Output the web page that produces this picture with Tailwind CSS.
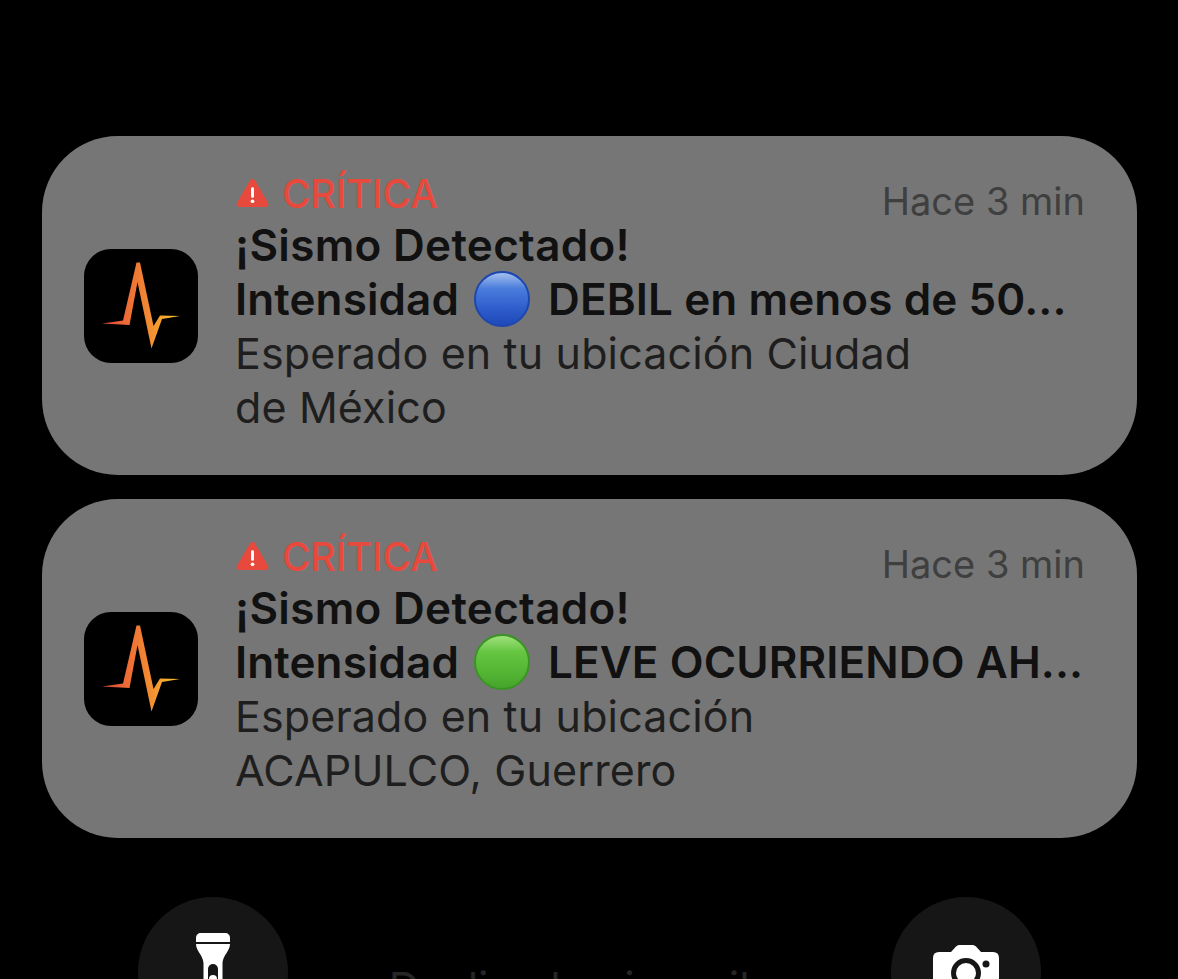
<!DOCTYPE html>
<html lang="es">
<head>
    <meta charset="UTF-8">
    <meta name="viewport" content="width=device-width, initial-scale=1.0">
    <title>Notificaciones</title>
    <script src="https://cdn.jsdelivr.net/npm/@tailwindcss/browser@4"></script>
</head>
<body class="bg-black">
    <div class="w-[1178px] h-[979px] overflow-hidden font-['Inter',sans-serif] pt-[136px] pl-[42px] pr-[41px]">
        <!-- Icon defs -->
        <svg class="w-0 h-0 absolute">
            <defs>
                <linearGradient id="pulse" x1="0" y1="0" x2="1" y2="0">
                    <stop offset="0" stop-color="#d9413a"></stop>
                    <stop offset="0.3" stop-color="#ee6a36"></stop>
                    <stop offset="0.6" stop-color="#f28a33"></stop>
                    <stop offset="1" stop-color="#f8c92c"></stop>
                </linearGradient>
            </defs>
        </svg>

        <!-- Notification 1 -->
        <div class="flex items-center h-[339px] bg-[#767676] rounded-[76px] pl-[42px] pr-[52px]">
            <div class="w-[114px] h-[114px] shrink-0 bg-black rounded-[27px] flex items-center justify-center">
                <svg class="w-[114px] h-[114px]" viewBox="0 0 114 114">
                    <path d="M18 74.5 L39 71.5 L52.5 13.5 L56 13.5 L69.5 77 L76 66.5 L96 67 L78 70 L67.5 99.5 L53.5 33 L45.5 76 Z" fill="url(#pulse)"></path>
                </svg>
            </div>
            <div class="flex-1 ml-[37px] pb-[11px]">
                <div class="flex justify-between items-start h-[51px]">
                    <div class="flex items-center text-[#e8493d] text-[39px] leading-[54px] font-medium">
                        <svg class="w-[33px] h-[29px] mr-[13px] ml-[1px] -mt-[2px]" viewBox="0 0 32 28">
                            <path d="M16 1 C17 1 18 1.6 18.6 2.6 L31 24 C32 26 31 28 28.6 28 L3.4 28 C1 28 0 26 1 24 L13.4 2.6 C14 1.6 15 1 16 1 Z" fill="#e8493d"></path>
                            <rect x="14.6" y="9" width="2.8" height="10" rx="1.2" fill="#fff"></rect>
                            <circle cx="16" cy="22.5" r="1.8" fill="#fff"></circle>
                        </svg>
                        <span>CRÍTICA</span>
                    </div>
                    <span class="text-[#3f3f3f] text-[38px] leading-[54px] mt-[7px]">Hace 3 min</span>
                </div>
                <p class="text-[#111111] text-[44px] leading-[54px] tracking-[0.3px] font-semibold whitespace-nowrap">¡Sismo Detectado!</p>
                <p class="text-[#111111] text-[44px] leading-[54px] h-[54px] tracking-[0.1px] font-semibold whitespace-nowrap flex items-center">Intensidad<span class="w-[56px] h-[56px] shrink-0 rounded-full ml-[15px] mr-[18px] border-2 border-[#1d46ae] bg-[linear-gradient(180deg,#a3bfee_0%,#4a7cdc_30%,#2d5ccb_70%,#1f49b8_100%)]"></span>DEBIL en menos de 50...</p>
                <p class="text-[#1e1e1e] text-[43px] leading-[54px] tracking-[0.13px] whitespace-nowrap">Esperado en tu ubicación Ciudad<br>de México</p>
            </div>
        </div>

        <!-- Notification 2 -->
        <div class="flex items-center h-[339px] mt-[24px] bg-[#767676] rounded-[76px] pl-[42px] pr-[52px]">
            <div class="w-[114px] h-[114px] shrink-0 bg-black rounded-[27px] flex items-center justify-center">
                <svg class="w-[114px] h-[114px]" viewBox="0 0 114 114">
                    <path d="M18 74.5 L39 71.5 L52.5 13.5 L56 13.5 L69.5 77 L76 66.5 L96 67 L78 70 L67.5 99.5 L53.5 33 L45.5 76 Z" fill="url(#pulse)"></path>
                </svg>
            </div>
            <div class="flex-1 ml-[37px] pb-[11px]">
                <div class="flex justify-between items-start h-[51px]">
                    <div class="flex items-center text-[#e8493d] text-[39px] leading-[54px] font-medium">
                        <svg class="w-[33px] h-[29px] mr-[13px] ml-[1px] -mt-[2px]" viewBox="0 0 32 28">
                            <path d="M16 1 C17 1 18 1.6 18.6 2.6 L31 24 C32 26 31 28 28.6 28 L3.4 28 C1 28 0 26 1 24 L13.4 2.6 C14 1.6 15 1 16 1 Z" fill="#e8493d"></path>
                            <rect x="14.6" y="9" width="2.8" height="10" rx="1.2" fill="#fff"></rect>
                            <circle cx="16" cy="22.5" r="1.8" fill="#fff"></circle>
                        </svg>
                        <span>CRÍTICA</span>
                    </div>
                    <span class="text-[#3f3f3f] text-[38px] leading-[54px] mt-[7px]">Hace 3 min</span>
                </div>
                <p class="text-[#111111] text-[44px] leading-[54px] tracking-[0.3px] font-semibold whitespace-nowrap">¡Sismo Detectado!</p>
                <p class="text-[#111111] text-[44px] leading-[54px] h-[54px] tracking-[0.1px] font-semibold whitespace-nowrap flex items-center">Intensidad<span class="w-[56px] h-[56px] shrink-0 rounded-full ml-[15px] mr-[18px] border-2 border-[#3a9424] bg-[linear-gradient(180deg,#a0e07c_0%,#66c642_30%,#54b534_70%,#45a42a_100%)]"></span>LEVE OCURRIENDO AH...</p>
                <p class="text-[#1e1e1e] text-[43px] leading-[54px] tracking-[0.13px] whitespace-nowrap">Esperado en tu ubicación<br>ACAPULCO, Guerrero</p>
            </div>
        </div>

        <!-- Lock screen controls -->
        <div class="flex justify-between items-start mt-[59px] px-[96px]">
            <div class="w-[150px] h-[150px] rounded-full bg-[#161616] flex justify-center pt-[36px]">
                <svg class="w-[36px] h-[80px]" viewBox="0 0 36 80">
                    <path d="M3 9 L1 9 L1 5 C1 2 3 0 6 0 L30 0 C33 0 35 2 35 5 L35 9 Z" fill="#fff"></path>
                    <path d="M1 11 L35 11 C35 18 28 22 27.5 30 L27.5 80 L8.5 80 L8.5 30 C8 22 1 18 1 11 Z" fill="#fff"></path>
                    <rect x="13" y="31" width="10" height="36" rx="5" fill="#161616"></rect>
                    <circle cx="18" cy="46" r="4" fill="#fff"></circle>
                </svg>
            </div>
            <p class="text-[#262626] text-[43px] leading-[44px] mt-[68px] whitespace-nowrap">Deslice hacia arriba</p>
            <div class="w-[150px] h-[150px] rounded-full bg-[#161616] flex justify-center pt-[48px]">
                <svg class="w-[66px] h-[60px]" viewBox="0 0 66 60">
                    <path d="M6 7 L18 7 L23 1.5 Q24.5 0 26 0 L40 0 Q41.5 0 43 1.5 L48 7 L60 7 Q66 7 66 13 L66 60 L0 60 L0 13 Q0 7 6 7 Z" fill="#fff"></path>
                    <circle cx="33" cy="28" r="15" fill="#161616"></circle>
                    <circle cx="33" cy="28" r="10" fill="#fff"></circle>
                    <circle cx="53" cy="19" r="3.5" fill="#161616"></circle>
                </svg>
            </div>
        </div>
    </div>
</body>
</html>
